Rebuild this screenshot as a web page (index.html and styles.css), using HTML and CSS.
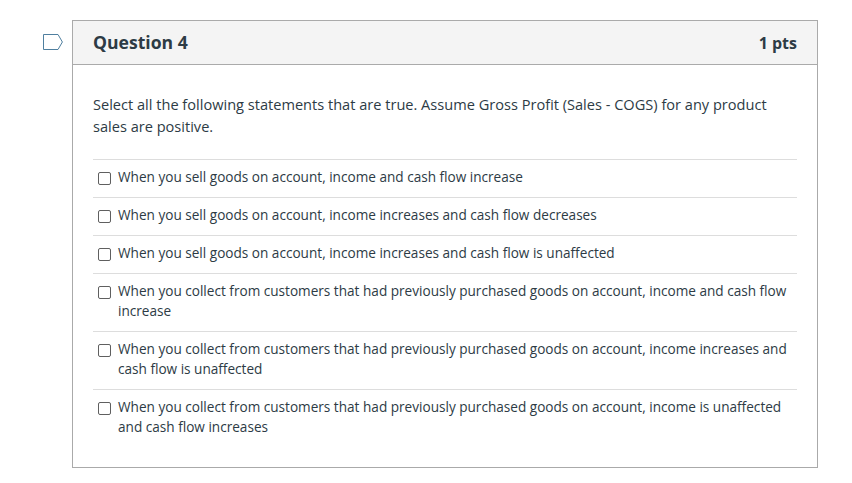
FILE: index.html
```html
<!DOCTYPE html>
<html lang="en">
<head>
<meta charset="utf-8">
<title>Question 4</title>
<link rel="stylesheet" href="styles.css">
</head>
<body>
<main class="page">
  <svg class="flag" width="20" height="16" viewBox="0 0 20 16" aria-hidden="true">
    <path d="M0.5 0.5H15L19.4 8L15 15.5H0.5Z" fill="#fff" stroke="#4f7f9f" stroke-width="1"/>
  </svg>
  <section class="card">
    <header class="card-head">
      <h2 class="title">Question 4</h2>
      <span class="pts">1 pts</span>
    </header>
    <div class="card-body">
      <p class="prompt">Select all the following statements that are true. Assume Gross Profit (Sales - COGS) for any product sales are positive.</p>
      <ul class="answers">
        <li class="answer"><span class="box"></span><span class="label">When you sell goods on account, income and cash flow increase</span></li>
        <li class="answer"><span class="box"></span><span class="label">When you sell goods on account, income increases and cash flow decreases</span></li>
        <li class="answer"><span class="box"></span><span class="label">When you sell goods on account, income increases and cash flow is unaffected</span></li>
        <li class="answer"><span class="box"></span><span class="label">When you collect from customers that had previously purchased goods on account, income and cash flow increase</span></li>
        <li class="answer"><span class="box"></span><span class="label">When you collect from customers that had previously purchased goods on account, income increases and cash flow is unaffected</span></li>
        <li class="answer"><span class="box"></span><span class="label">When you collect from customers that had previously purchased goods on account, income is unaffected and cash flow increases</span></li>
      </ul>
    </div>
  </section>
</main>
</body>
</html>
```

FILE: styles.css
```css
html, body {
  margin: 0;
  padding: 0;
  background: #fff;
}

.page {
  display: flex;
  align-items: flex-start;
  gap: 9px;
  padding: 20px 34px 15px 43px;
  font-family: "Open Sans", sans-serif;
  color: #2d3b45;
}

.flag {
  flex: none;
  margin-top: 14px;
}

.card {
  flex: 1;
  min-width: 0;
  height: 448px;
  box-sizing: border-box;
  border: 1px solid #aaa;
}

.card-head {
  display: flex;
  align-items: center;
  justify-content: space-between;
  box-sizing: border-box;
  height: 44px;
  padding: 0 20px;
  background: #f4f4f4;
  border-bottom: 1px solid #aaa;
}

.title {
  margin: 0 0 2px;
  font-size: 17.6px;
  font-weight: 700;
}

.pts {
  font-size: 16px;
  font-weight: 700;
}

.card-body {
  padding: 28px 20px 0;
}

.prompt {
  margin: 0 0 22px;
  font-size: 14.58px;
  line-height: 22px;
}

.answers {
  margin: 0;
  padding: 0;
  list-style: none;
}

.answer {
  display: flex;
  align-items: flex-start;
  gap: 7px;
  padding: 7px 0 10px 5px;
  border-top: 1px solid #ddd;
}

.box {
  flex: none;
  width: 13px;
  height: 13px;
  box-sizing: border-box;
  margin-top: 5px;
  background: #fff;
  border: 1px solid #5f5f5f;
  border-radius: 2px;
}

.label {
  font-size: 13.6px;
  line-height: 20px;
}
```
